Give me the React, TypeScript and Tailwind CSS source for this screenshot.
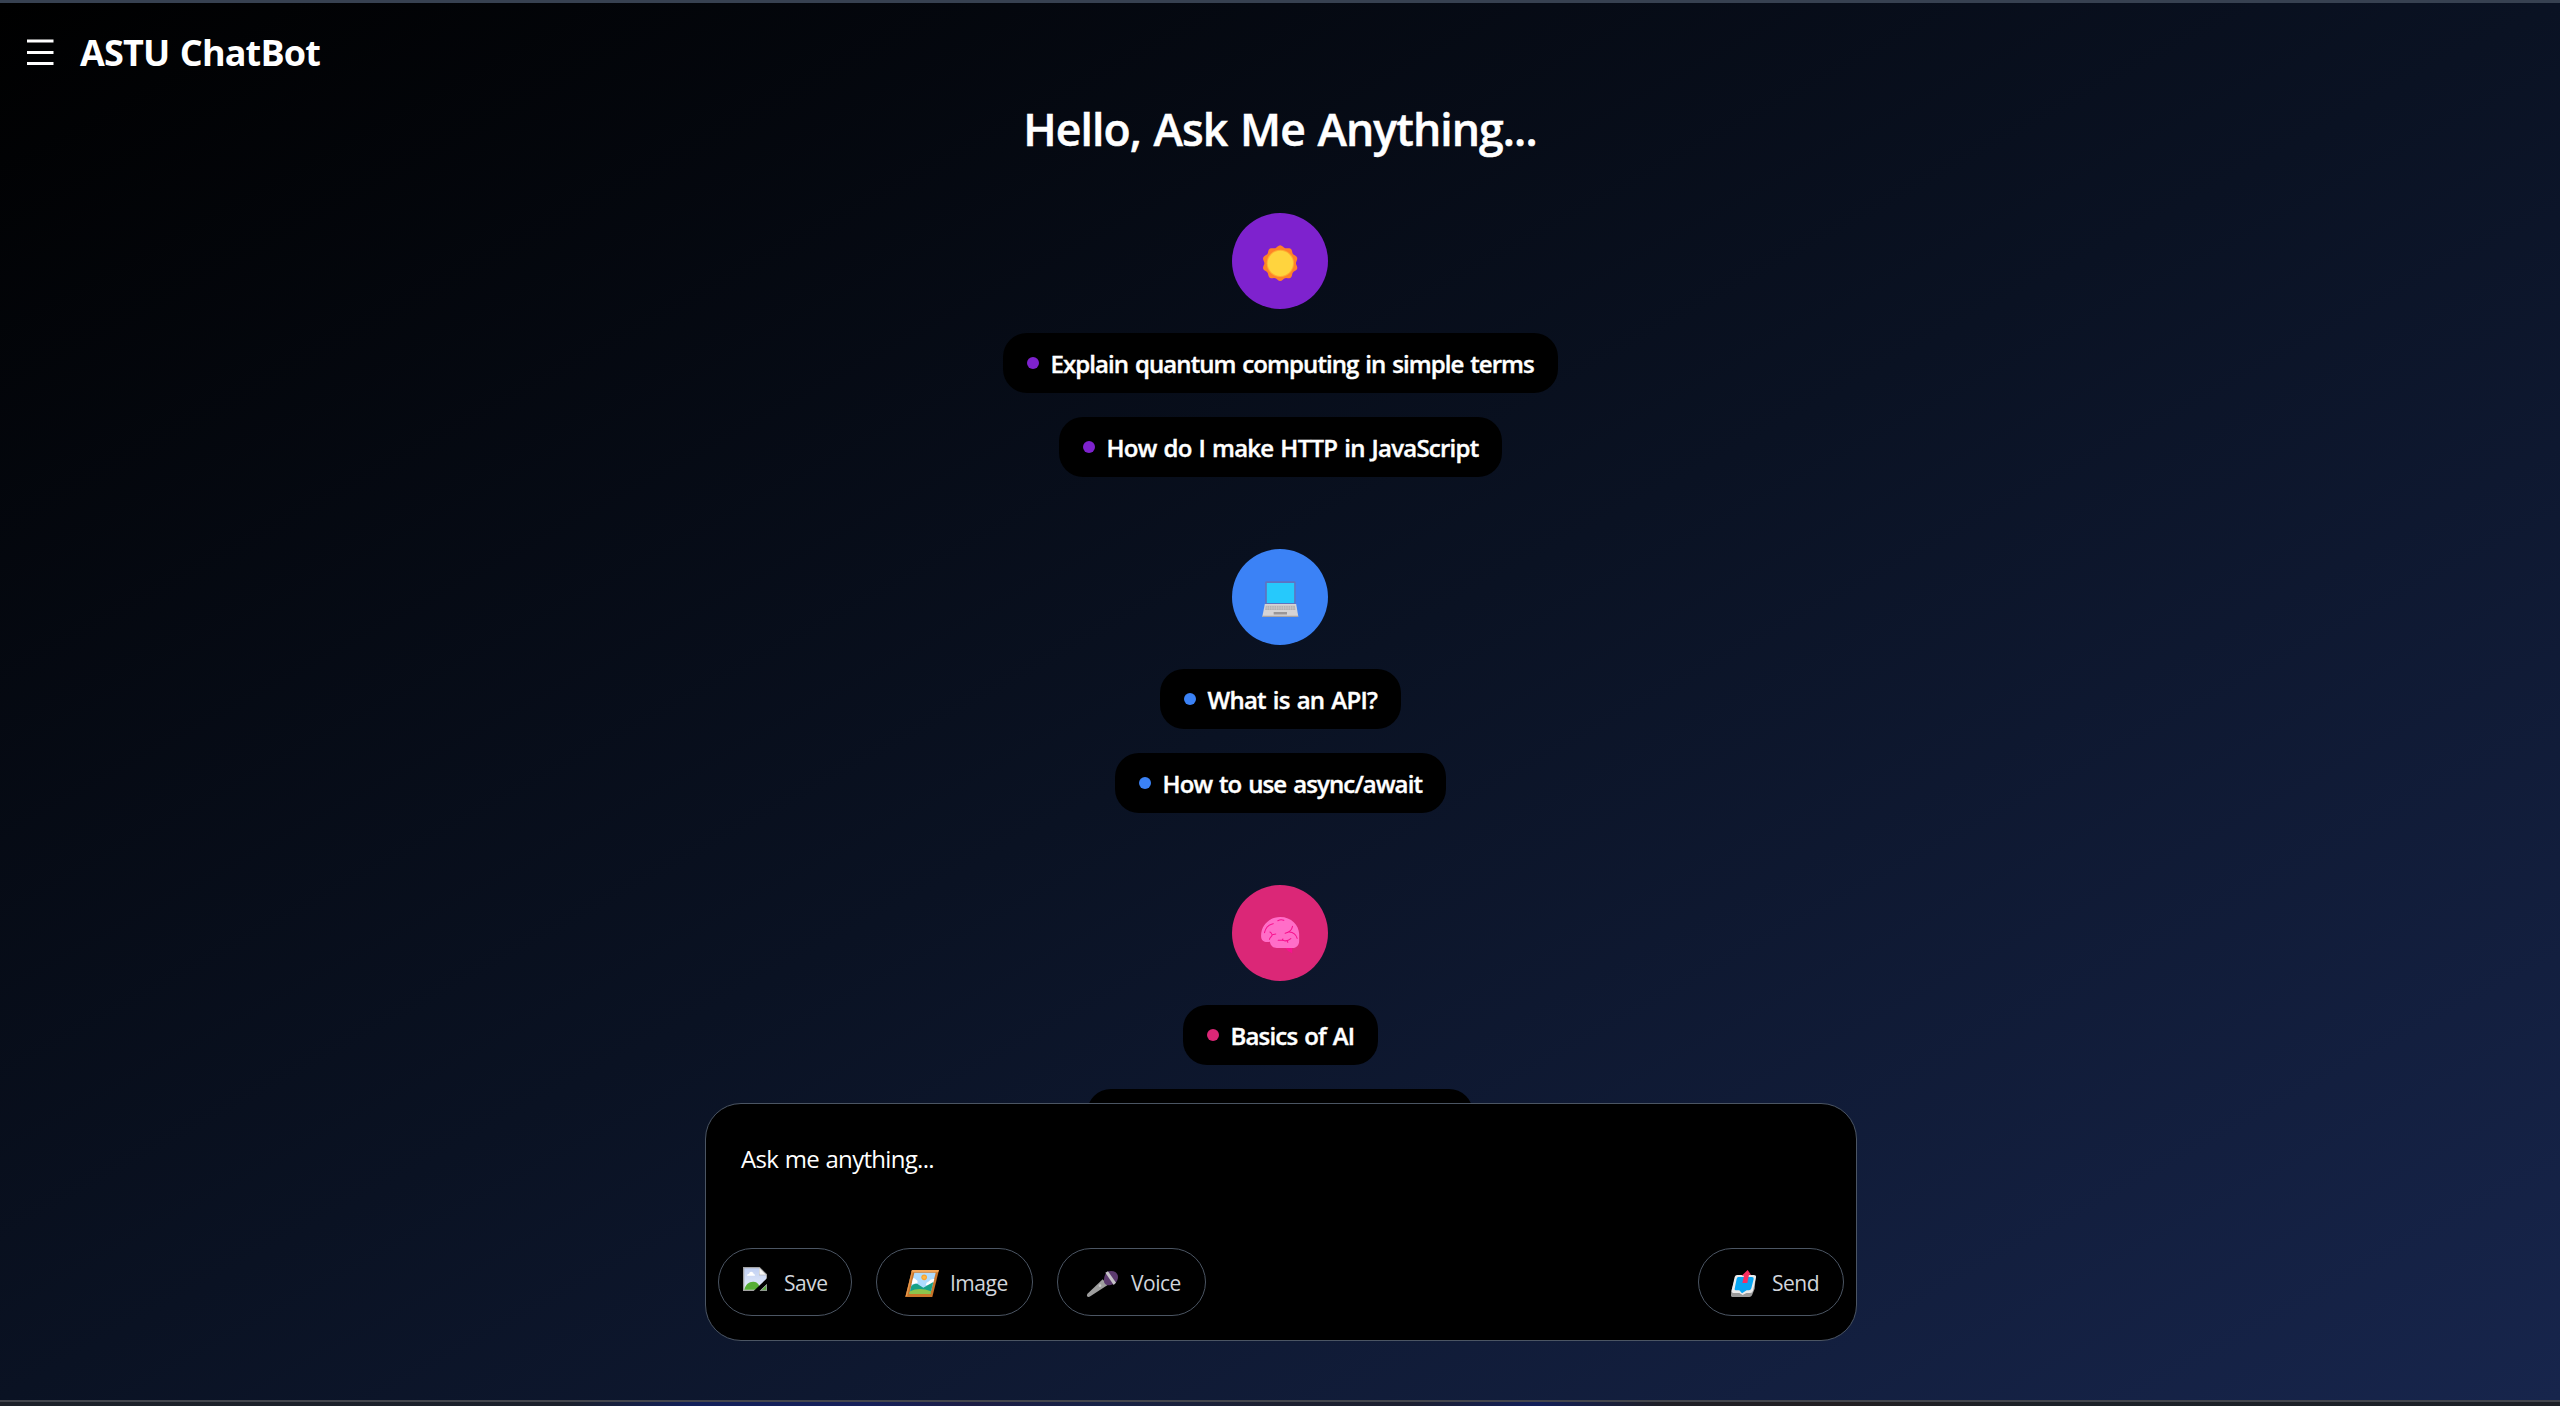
import type { ReactNode } from "react";

function SunIcon() {
  const points: string[] = [];
  for (let i = 0; i < 80; i++) {
    const a = (i / 80) * Math.PI * 2;
    const r = 50.5 + 3.2 * Math.cos(a * 10);
    points.push(`${(241 + r * Math.sin(a)).toFixed(1)},${(189.5 - r * Math.cos(a)).toFixed(1)}`);
  }
  return (
    <svg viewBox="96.500 39 288 288" className="size-full">
      <polygon points={points.join(" ")} fill="#ff8228" />
      <circle cx="241.5" cy="190" r="41" fill="#ffae30" />
      <circle cx="241.5" cy="190" r="38" fill="#ffd43e" />
    </svg>
  );
}

function LaptopIcon() {
  return (
    <svg viewBox="96.500 27 288 288" className="size-full">
      <rect x="196" y="124" width="91.500" height="70" rx="4" fill="#5f73bf" />
      <rect x="201" y="129" width="82" height="60" fill="#26c9fc" />
      <path d="M195 192H289L295 227V231H188V227Z" fill="#d6d3d4" />
      <path d="M188 227.500H295V231H188Z" fill="#a9a3a3" />
      <path d="M198 197H285L287 210H196Z" fill="#b5b2b3" />
      <path d="M202 198V209M209 198V209M216 198V209M223 198V209M230 198V209M237 198V209M244 198V209M251 198V209M258 198V209M265 198V209M272 198V209M279 198V209" stroke="#d0cdce" strokeWidth="2" />
      <path d="M196 204H286" stroke="#c8c5c6" strokeWidth="1.500" />
      <rect x="221.500" y="216" width="40" height="7.500" fill="#9a9697" />
    </svg>
  );
}

function BrainIcon() {
  return (
    <svg viewBox="96.500 45 288 288" className="size-full">
      <path d="M254 231H277V250Q265 246 256 233Z" fill="#f8128e" />
      <path d="M241 141C275 141 297 165 298 192V212C298 227 289 234 277 234H231C219 234 213 228 210 215C196 219 185 213 184 202C181 170 206 141 241 141Z" fill="#ff6ec8" />
      <g fill="none" stroke="#f8128e" strokeWidth="3.200" strokeLinecap="round" strokeLinejoin="round">
        <path d="M194 188C197 173 208 164 220 161" />
        <path d="M234 152C240 148.500 247 148.500 252 151" />
        <path d="M210 186C215 187 216 194 217 194C218 194 222 193 228 192M217 194C217 200 210 201 209 208" />
        <path d="M278 169C276 180 268 187 256 190M268 186C281 187 289 194 292 205" />
        <path d="M235 211H250Q261 216 273 206M247 211L249 207M262 213L264 217" />
      </g>
    </svg>
  );
}

function BrokenImageIcon() {
  return (
    <svg viewBox="99 81 123 90" className="h-[30px] w-[41px]">
      <defs>
        <linearGradient id="sky" x1="0" y1="0" x2="0" y2="1">
          <stop offset="0" stopColor="#c1d0f2" />
          <stop offset="1" stopColor="#e6edfb" />
        </linearGradient>
      </defs>
      <path d="M99 81H149L171 103V153H99Z" fill="#a3a3a3" />
      <path d="M103 85H147V106H168V149H103Z" fill="url(#sky)" />
      <path d="M148 84V104H168Z" fill="#f5f5f5" />
      <path d="M111 107Q111 101 117 102Q119 94 126 96Q131 98 131 102Q136 103 135 107Z" fill="#fff" />
      <path d="M103 149C106 133 118 124 131 125C142 126 147 132 152 149Z" fill="#56ae35" />
      <path d="M171 115L131 153H149L171 132Z" fill="#000" />
      <path d="M171 132L149 153H171Z" fill="#8f9a8f" />
      <path d="M168 138L156 149H168Z" fill="#56ae35" />
    </svg>
  );
}

function PictureIcon() {
  return (
    <svg viewBox="573 81 147 90" className="h-[30px] w-[49px]">
      <path d="M606 90H687L667 171H586Z" fill="#c9752a" />
      <path d="M606 90H687L684 97H604Z" fill="#f2a75a" />
      <path d="M606 90L586 171L592 166L609 94Z" fill="#e8964a" />
      <path d="M613 98H677L661 162H598Z" fill="#aedcff" />
      <path d="M609 115Q616 113 618 119Q625 121 622 129L605 133Z" fill="#fff" />
      <path d="M673 117Q661 116 657 124Q648 127 647 136L668 133Z" fill="#fff" />
      <circle cx="642.500" cy="112" r="8.500" fill="#f9a32d" />
      <circle cx="642.500" cy="112" r="5" fill="#fbb84a" />
      <path d="M604 138Q617 126 627 135L640 143L670 126L661 162H598Z" fill="#17a187" />
      <path d="M600 154Q628 140 663 154L661 162H598Z" fill="#8cc44c" />
    </svg>
  );
}

function MicIcon() {
  return (
    <svg viewBox="366 81 147 90" className="h-[30px] w-[49px]">
      <path d="M428 118L443 135L391 169Q384 173 381 168Q380 164 384 160Z" fill="#9e9e9e" />
      <circle cx="420" cy="137" r="4" fill="#c9c9c9" />
      <path d="M441 96Q455 90 467 97Q478 106 472 121Q467 132 452 135Q438 138 433 129Q428 112 441 96Z" fill="#5b3a6e" />
      <path d="M436 98L444 94L468 128L461 135Z" fill="#c6c3c8" />
    </svg>
  );
}

function OutboxIcon() {
  return (
    <svg viewBox="99 81 147 90" className="h-[30px] w-[49px]">
      <path d="M124 153L136 112H197L194 146L186 166Q184 171 178 171H129Q122 171 123 164Z" fill="#9b9b9b" />
      <path d="M141 105H191Q199 105 198 112L189 152Q187 159 180 159H169L158 165L148 159H129Q123 158 125 151L134 111Q136 105 141 105Z" fill="#ececec" />
      <path d="M145 111H186Q192 111 191 117L184 145Q182 151 177 151H170L156 160L148 151H138Q133 151 134 146L140 116Q141 111 145 111Z" fill="#08a5f2" />
      <path d="M173 90L183 104H177L172 129H157L162 107H155Z" fill="#f92f60" />
    </svg>
  );
}

function Pill({ text, width, tracking, dot }: { text: string; width: string; tracking: string; dot: string }) {
  return (
    <div className={`flex h-[60px] shrink-0 items-center gap-3 whitespace-nowrap rounded-3xl bg-black pl-6 text-2xl font-semibold text-white [-webkit-text-stroke:0.4px_white] [word-spacing:1.5px] ${width} ${tracking}`}>
      <span className={`size-3 shrink-0 rounded-full ${dot}`} />
      <span className="pt-[2px] leading-9">{text}</span>
    </div>
  );
}

function Topic({ color, icon, children }: { color: string; icon: ReactNode; children: ReactNode }) {
  return (
    <section className="flex shrink-0 flex-col items-center gap-6">
      <div className={`size-24 overflow-hidden rounded-full ${color}`}>{icon}</div>
      {children}
    </section>
  );
}

function ActionButton({ label, icon, width }: { label: string; icon: ReactNode; width: string }) {
  return (
    <button className={`flex h-[68px] items-center whitespace-nowrap rounded-full border border-[#4b5563] pl-6 text-[21px] leading-[30px] tracking-[-0.5px] text-[#d1d5db] ${width}`}>
      {icon}
      <span className="pt-[2px]">{label}</span>
    </button>
  );
}

export default function App() {
  return (
    <div className="flex h-[1406px] w-full flex-col overflow-hidden bg-[#1d2027] font-['Open_Sans',sans-serif]">
      <div className="h-[3px] shrink-0 bg-[#374151]" />
      <div className="flex h-[1397px] shrink-0 flex-col items-center bg-[linear-gradient(to_bottom_right,#000000,#0a1223_50%,#17254c)]">
        <header className="flex h-[97px] w-full shrink-0 items-center pl-[27px]">
          <svg viewBox="0 0 27 27" className="h-[27px] w-[27px]">
            <path d="M0 3H26.500M0 14.500H26.500M0 25.500H26.500" stroke="#fff" strokeWidth="3" />
          </svg>
          <h1 className="pl-[26px] pt-[3px] text-[36px] font-bold leading-[50px] tracking-[-0.85px] text-white [word-spacing:2px]">ASTU ChatBot</h1>
        </header>
        <h2 className="mb-[53px] h-[60px] text-[44.5px] font-semibold leading-[58px] tracking-[-0.92px] text-white [-webkit-text-stroke:0.5px_white] [word-spacing:2px]">Hello, Ask Me Anything...</h2>

        <main className="flex h-[890px] w-full shrink-0 flex-col items-center overflow-hidden">
          <div className="flex flex-col gap-[72px]">
            <Topic color="bg-[#7e22ce]" icon={<SunIcon />}>
              <Pill text="Explain quantum computing in simple terms" width="w-[555px]" tracking="tracking-[-0.92px]" dot="bg-[#7e22ce]" />
              <Pill text="How do I make HTTP in JavaScript" width="w-[443px]" tracking="tracking-[-0.76px]" dot="bg-[#7e22ce]" />
            </Topic>
            <Topic color="bg-[#3b82f6]" icon={<LaptopIcon />}>
              <Pill text="What is an API?" width="w-[241px]" tracking="tracking-[-0.75px]" dot="bg-[#3b82f6]" />
              <Pill text="How to use async/await" width="w-[331px]" tracking="tracking-[-0.88px]" dot="bg-[#3b82f6]" />
            </Topic>
            <Topic color="bg-[#db2777]" icon={<BrainIcon />}>
              <Pill text="Basics of AI" width="w-[195px]" tracking="tracking-[-0.82px]" dot="bg-[#db2777]" />
              <div className="h-[60px] w-[386px] rounded-3xl bg-black" />
            </Topic>
          </div>
        </main>

        <div className="ml-[2px] flex h-[238px] w-[1152px] shrink-0 flex-col justify-between rounded-[36px] border border-[#4b5563] bg-black px-3 pb-6 pt-9">
          <p className="pl-[23px] pt-px text-2xl leading-9 tracking-[-0.7px] text-white [word-spacing:1px]">Ask me anything...</p>
          <div className="flex items-center gap-6">
            <ActionButton label="Save" icon={<BrokenImageIcon />} width="w-[134px]" />
            <ActionButton label="Image" icon={<PictureIcon />} width="w-[157px]" />
            <ActionButton label="Voice" icon={<MicIcon />} width="w-[149px]" />
            <div className="grow" />
            <ActionButton label="Send" icon={<OutboxIcon />} width="w-[146px]" />
          </div>
        </div>
      </div>
      <div className="h-[2px] shrink-0 bg-[#43454c]" />
      <div className="h-[4px] shrink-0 bg-[linear-gradient(90deg,#1d2129_0%,#1b202b_22%,#12205a_27%,#16205a_34%,#1c1d45_38%,#172247_43%,#1d2030_50%,#1c1f30_55%,#121f5a_60%,#1f1f26_65%,#221f22_72%,#1c2128_80%,#1d2027_100%)]" />
    </div>
  );
}
